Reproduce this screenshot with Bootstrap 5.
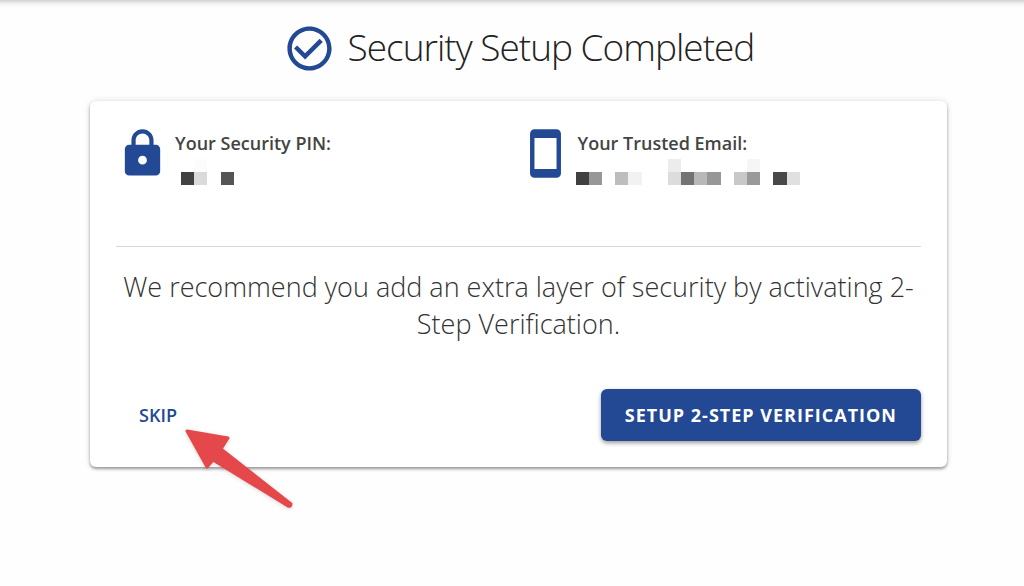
<!DOCTYPE html>
<html lang="en">
<head>
<meta charset="utf-8">
<meta name="viewport" content="width=device-width, initial-scale=1">
<title>Security Setup Completed</title>
<link href="https://cdn.jsdelivr.net/npm/bootstrap@5.3.0/dist/css/bootstrap.min.css" rel="stylesheet">
<style>
  :root { --brand: #234995; }
  body { font-family: "Open Sans", sans-serif; color: #444; background: #fefefe; }
  .topbar-shadow { height: 8px; background: linear-gradient(#d2d2d2, #f3f3f3 50%, #fefefe); }
  .page { padding: 0 77px 32px 90px; }
  .page-head { padding: 14px 0 26px; gap: 12px; }
  .title { font-size: 37px; line-height: 48px; padding-bottom: 4px; font-weight: 300; color: #222; letter-spacing: -1px; }
  .brand-icon { width: 53px; height: 53px; fill: var(--brand); flex: none; }
  .panel { padding: 26px; border: 0; border-radius: 6px; background: #fff; box-shadow: 0 2px 3px rgba(0,0,0,.36), 0 0 7px rgba(0,0,0,.12); }
  .fact-row { min-height: 119px; }
  .fact { padding-left: 6px; }
  .fact-label { font-size: 18px; line-height: 26px; font-weight: 600; margin: 3px 0; }
  .masked { display: block; height: 26px; }
  .rule { margin: 0; color: #d8d8d8; opacity: 1; }
  .advice { font-size: 27px; line-height: 37px; font-weight: 300; color: #333; margin: 21px 0 47px; }
  .skip { color: var(--brand); font-size: 18px; line-height: 28px; font-weight: 600; padding: 12px 23px; --bs-btn-hover-color: #16346f; }
  .setup { --bs-btn-color: #fff; --bs-btn-bg: var(--brand); --bs-btn-hover-color: #fff; --bs-btn-hover-bg: #1b3b7b;
    font-size: 18px; line-height: 28px; font-weight: 700; letter-spacing: 1px; padding: 12px 24px; border: 0; border-radius: 6px;
    box-shadow: 0 2px 4px rgba(0,0,0,.4); }
  .pointer { position: absolute; left: 66px; top: 37px; width: 114px; height: 84px; pointer-events: none; filter: drop-shadow(0 1px 2px rgba(0,0,0,.15)); }
</style>
</head>
<body class="min-vh-100">
<div class="topbar-shadow"></div>
<main class="page">
  <header class="page-head d-flex justify-content-center align-items-center">
    <svg class="brand-icon" viewBox="0 0 24 24" aria-hidden="true"><path d="M16.59 7.58 10 14.17l-3.59-3.58L5 12l5 5 8-8zM12 2C6.48 2 2 6.48 2 12s4.48 10 10 10 10-4.48 10-10S17.520 2 12 2zm0 18c-4.420 0-8-3.580-8-8s3.580-8 8-8 8 3.580 8 8-3.580 8-8 8z"/></svg>
    <h1 class="title mb-0">Security Setup Completed</h1>
  </header>

  <section class="card panel">
    <div class="row g-0 fact-row">
      <div class="col-6 d-flex align-items-start">
        <svg class="brand-icon" viewBox="0 0 24 24" aria-hidden="true"><path d="M18 8h-1V6c0-2.760-2.240-5-5-5S7 3.240 7 6v2H6c-1.100 0-2 .9-2 2v10c0 1.100.9 2 2 2h12c1.100 0 2-.9 2-2V10c0-1.100-.9-2-2-2zm-6 9c-1.100 0-2-.9-2-2s.9-2 2-2 2 .9 2 2-.9 2-2 2zm3.100-9H8.900V6c0-1.710 1.390-3.100 3.100-3.100s3.100 1.390 3.100 3.100v2z"/></svg>
        <div class="fact">
          <h2 class="fact-label">Your Security PIN:</h2>
          <svg class="masked" width="64" height="26" role="img" aria-label="Hidden PIN" shape-rendering="crispEdges">
            <rect x="6" y="13" width="13" height="13" fill="#414141"/><rect x="19" y="13" width="13" height="13" fill="#dadada"/>
            <rect x="19" y="0" width="13" height="13" fill="#fcfcfc"/><rect x="46" y="13" width="13" height="13" fill="#555"/>
          </svg>
        </div>
      </div>
      <div class="col-6 d-flex align-items-start">
        <svg class="brand-icon" viewBox="0 0 24 24" aria-hidden="true"><path d="M17 1H7C5.900 1 5 1.900 5 3v18c0 1.100.9 2 2 2h10c1.100 0 2-.9 2-2V3c0-1.100-.9-2-2-2zm0 18H7V5h10v14z"/></svg>
        <div class="fact">
          <h2 class="fact-label">Your Trusted Email:</h2>
          <svg class="masked" width="226" height="26" viewBox="2 0 226 26" overflow="visible" role="img" aria-label="Hidden email" shape-rendering="crispEdges">
            <rect x="0" y="13" width="13" height="13" fill="#404040"/><rect x="13" y="13" width="13" height="13" fill="#979797"/>
            <rect x="39" y="13" width="13" height="13" fill="#bdbdbd"/><rect x="52" y="13" width="14" height="13" fill="#f2f2f2"/>
            <rect x="92" y="0" width="13" height="13" fill="#ececec"/><rect x="92" y="13" width="13" height="13" fill="#dcdcdc"/>
            <rect x="105" y="13" width="13" height="13" fill="#737373"/><rect x="118" y="13" width="13" height="13" fill="#b8b8b8"/>
            <rect x="131" y="13" width="14" height="13" fill="#979797"/><rect x="158" y="13" width="13" height="13" fill="#c8c8c8"/>
            <rect x="171" y="0" width="13" height="13" fill="#f6f6f6"/><rect x="171" y="13" width="13" height="13" fill="#9a9a9a"/>
            <rect x="197" y="13" width="14" height="13" fill="#484848"/><rect x="211" y="13" width="13" height="13" fill="#e0e0e0"/>
          </svg>
        </div>
      </div>
    </div>
    <hr class="rule">
    <p class="advice text-center">We recommend you add an extra layer of security by activating 2-Step Verification.</p>
    <div class="d-flex justify-content-between align-items-center">
      <div class="position-relative">
        <button type="button" class="btn border-0 skip">SKIP</button>
        <svg class="pointer" viewBox="0 0 114 84" aria-hidden="true"><path d="M5 5 46 12 39 23 109 78Q109 81 106 80L31 34 25 41Z" fill="#e5484a" stroke="#e5484a" stroke-width="3" stroke-linejoin="round"/></svg>
      </div>
      <button type="button" class="btn setup">SETUP 2-STEP VERIFICATION</button>
    </div>
  </section>
</main>
<script src="https://cdn.jsdelivr.net/npm/bootstrap@5.3.0/dist/js/bootstrap.bundle.min.js"></script>
</body>
</html>
